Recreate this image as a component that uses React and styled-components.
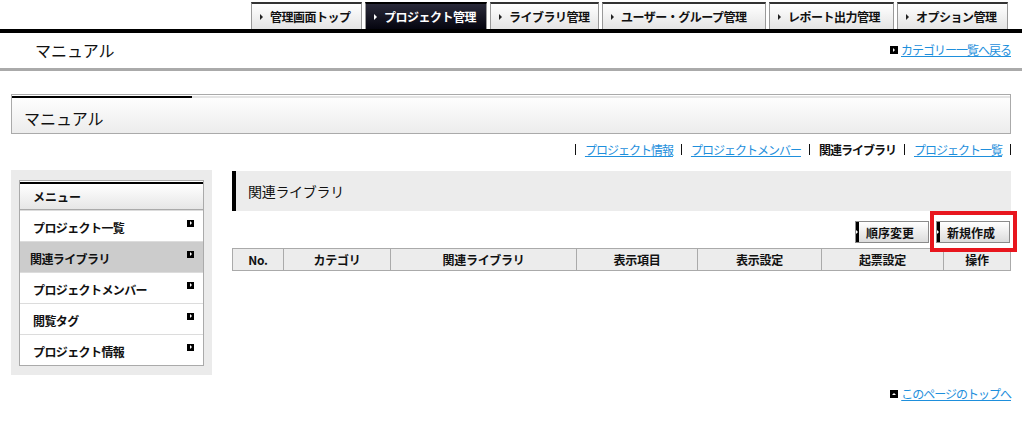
import React from "react";
import styled, { createGlobalStyle } from "styled-components";

const Global = createGlobalStyle`
  html, body { margin: 0; padding: 0; background: #fff; }
  body { font-family: "Noto Sans CJK JP", "Noto Sans", sans-serif; font-size: 12px; color: #111; }
  * { box-sizing: border-box; }
`;

const Page = styled.div`
  width: 1022px;
  min-height: 435px;
`;

const TopNav = styled.nav`
  display: flex;
  justify-content: flex-end;
  gap: 3px;
  padding: 2px 14px 0 0;
  border-bottom: 4px solid #000;
  height: 33px;
`;

const Tab = styled.a`
  display: flex;
  align-items: center;
  gap: 7px;
  width: ${(p) => p.$w}px;
  height: 27px;
  padding-left: 8px;
  font-weight: bold;
  font-size: 12px;
  letter-spacing: -0.5px;
  text-decoration: none;
  border: 1px solid #999;
  border-top: 2px solid ${(p) => (p.$active ? "#000" : "#333")};
  border-bottom: none;
  color: ${(p) => (p.$active ? "#fff" : "#111")};
  background: ${(p) =>
    p.$active
      ? "linear-gradient(#2a2a3a, #05050f)"
      : "linear-gradient(#ffffff, #e4e4e4)"};
`;

const TabArrow = styled.span`
  width: 0;
  height: 0;
  border-top: 3px solid transparent;
  border-bottom: 3px solid transparent;
  border-left: 3px solid ${(p) => (p.$light ? "#fff" : "#222")};
`;

const HeaderRow = styled.header`
  display: flex;
  align-items: center;
  justify-content: space-between;
  height: 38px;
  padding: 0 11px 2px 35px;
  border-bottom: 3px solid #aaa;
`;

const HeaderTitle = styled.h1`
  margin: 0;
  font-size: 16px;
  font-weight: normal;
  color: #111;
`;

const IconLink = styled.a`
  display: inline-flex;
  align-items: center;
  gap: 2px;
  color: #1e8fdc;
  text-decoration: underline;
  font-size: 12px;
  letter-spacing: -1px;
`;

const IconBox = styled.span`
  display: inline-flex;
  align-items: center;
  justify-content: center;
  width: 8px;
  height: 8px;
  background: #000;
  margin-right: 1px;
`;

const Panel = styled.section`
  margin: 23px 11px 0 11px;
  border: 1px solid #aaa;
  height: 40px;
  padding: 1px 0 0;
  background: linear-gradient(#ffffff, #ececec);
`;

const PanelStrip = styled.div`
  height: 2px;
  background: linear-gradient(to right, #000 0, #000 180px, #e4e4e4 180px);
`;

const PanelTitle = styled.h2`
  margin: 0;
  padding: 8px 0 0 12px;
  font-size: 16px;
  font-weight: normal;
  line-height: 24px;
`;

const SubNav = styled.ul`
  display: flex;
  justify-content: flex-end;
  align-items: center;
  list-style: none;
  margin: 0;
  padding: 0 11px 0 0;
  height: 31px;
  font-size: 12px;
  letter-spacing: -1px;
`;

const SubItem = styled.li`
  display: flex;
  align-items: center;
  &::before {
    content: "";
    width: 1px;
    height: 11px;
    background: #111;
    margin: 0 9px 0 8px;
  }
  &:last-child::after {
    content: "";
    width: 1px;
    height: 11px;
    background: #111;
    margin-left: 8px;
  }
`;

const SubLink = styled.a`
  color: ${(p) => (p.$current ? "#111" : "#1e8fdc")};
  text-decoration: ${(p) => (p.$current ? "none" : "underline")};
  font-weight: ${(p) => (p.$current ? "bold" : "normal")};
`;

const Body = styled.div`
  display: flex;
  gap: 20px;
  padding: 5px 11px 0 11px;
`;

const Side = styled.aside`
  width: 202px;
  background: #ebebeb;
  padding: 10px 8px 9px 8px;
`;

const Menu = styled.div`
  background: #fff;
  border: 1px solid #aaa;
`;

const MenuHead = styled.div`
  margin-top: 1px;
  border-top: 2px solid #000;
  border-bottom: 1px solid #aaa;
  height: 28px;
  display: flex;
  align-items: center;
  padding-left: 13px;
  font-weight: bold;
  background: linear-gradient(#ffffff, #e6e6e6);
`;

const MenuItem = styled.div`
  display: flex;
  align-items: center;
  justify-content: space-between;
  height: 31px;
  padding: 2px 9px 0 ${(p) => (p.$active ? 10 : 13)}px;
  font-weight: bold;
  letter-spacing: -0.6px;
  background: ${(p) => (p.$active ? "#cccccc" : "#fff")};
  border-top: 1px solid #dcdcdc;
  &:first-of-type { border-top: none; }
`;

const ItemArrow = styled.span`
  display: inline-flex;
  align-items: center;
  justify-content: center;
  width: 7px;
  height: 7px;
  background: #000;
  margin-top: -8px;
`;

const Main = styled.main`
  flex: 1;
  display: flex;
  flex-direction: column;
  padding-top: 1px;
`;

const Heading = styled.h3`
  margin: 0;
  height: 40px;
  display: flex;
  align-items: center;
  border-left: 4px solid #000;
  background: #ececec;
  padding-left: 12px;
  font-size: 14px;
  font-weight: normal;
  letter-spacing: -0.3px;
`;

const Buttons = styled.div`
  display: flex;
  justify-content: flex-end;
  align-items: flex-start;
  gap: 7px;
  padding: 10px 1px 0 0;
  height: 37px;
`;

const Highlight = styled.span`
  position: relative;
  display: inline-flex;
  &::after {
    content: "";
    position: absolute;
    top: -10px;
    left: -6px;
    right: -7px;
    bottom: -9px;
    border: 4px solid #e8161e;
    pointer-events: none;
  }
`;

const Button = styled.button`
  display: flex;
  align-items: center;
  width: 74px;
  height: 22px;
  padding: 0;
  border: 1px solid #8a8a8a;
  background: linear-gradient(#ffffff, #dcdcdc);
  font-family: inherit;
  font-size: 12px;
  font-weight: bold;
  color: #111;
  cursor: pointer;
`;

const ButtonBar = styled.span`
  display: flex;
  align-items: center;
  width: 3px;
  height: 100%;
  background: #000;
  margin-right: 7px;
  &::after {
    content: "";
    border-top: 2px solid transparent;
    border-bottom: 2px solid transparent;
    border-left: 2px solid #fff;
  }
`;

const Table = styled.table`
  width: 778px;
  border-collapse: collapse;
  table-layout: fixed;
`;

const Th = styled.th`
  width: ${(p) => p.$w}px;
  height: 22px;
  padding: 0;
  border: 1px solid #aaa;
  background: #ececec;
  font-size: 12px;
  font-weight: bold;
  text-align: center;
  letter-spacing: -0.3px;
`;

const Footer = styled.div`
  display: flex;
  justify-content: flex-end;
  padding: 10px 11px 0 0;
`;

const RightTri = () => (
  <svg width="4" height="6" viewBox="0 0 4 6"><path d="M1 1L3 3L1 5Z" fill="#fff" /></svg>
);
const UpTri = () => (
  <svg width="6" height="4" viewBox="0 0 6 4"><path d="M1 3L3 1L5 3Z" fill="#fff" /></svg>
);

const tabs = [
  { t: "管理画面トップ", w: 111 },
  { t: "プロジェクト管理", w: 122, active: true },
  { t: "ライブラリ管理", w: 109 },
  { t: "ユーザー・グループ管理", w: 164 },
  { t: "レポート出力管理", w: 125 },
  { t: "オプション管理", w: 111 },
];

const subs = [
  { t: "プロジェクト情報" },
  { t: "プロジェクトメンバー" },
  { t: "関連ライブラリ", current: true },
  { t: "プロジェクト一覧" },
];

const menu = [
  { t: "プロジェクト一覧" },
  { t: "関連ライブラリ", active: true },
  { t: "プロジェクトメンバー" },
  { t: "閲覧タグ" },
  { t: "プロジェクト情報" },
];

const cols = [
  { t: "No.", w: 51 },
  { t: "カテゴリ", w: 107 },
  { t: "関連ライブラリ", w: 186 },
  { t: "表示項目", w: 121 },
  { t: "表示設定", w: 124 },
  { t: "起票設定", w: 122 },
  { t: "操作", w: 67 },
];

export default function App() {
  return (
    <Page>
      <Global />
      <TopNav>
        {tabs.map((x) => (
          <Tab key={x.t} $w={x.w} $active={x.active}>
            <TabArrow $light={x.active} />
            {x.t}
          </Tab>
        ))}
      </TopNav>
      <HeaderRow>
        <HeaderTitle>マニュアル</HeaderTitle>
        <IconLink>
          <IconBox><RightTri /></IconBox>
          カテゴリー一覧へ戻る
        </IconLink>
      </HeaderRow>
      <Panel>
        <PanelStrip />
        <PanelTitle>マニュアル</PanelTitle>
      </Panel>
      <SubNav>
        {subs.map((s) => (
          <SubItem key={s.t}>
            <SubLink $current={s.current}>{s.t}</SubLink>
          </SubItem>
        ))}
      </SubNav>
      <Body>
        <Side>
          <Menu>
            <MenuHead>メニュー</MenuHead>
            {menu.map((m) => (
              <MenuItem key={m.t} $active={m.active}>
                {m.t}
                <ItemArrow><RightTri /></ItemArrow>
              </MenuItem>
            ))}
          </Menu>
        </Side>
        <Main>
          <Heading>関連ライブラリ</Heading>
          <Buttons>
            <Button><ButtonBar />順序変更</Button>
            <Highlight>
              <Button><ButtonBar />新規作成</Button>
            </Highlight>
          </Buttons>
          <Table>
            <thead>
              <tr>
                {cols.map((c) => (
                  <Th key={c.t} $w={c.w}>{c.t}</Th>
                ))}
              </tr>
            </thead>
          </Table>
        </Main>
      </Body>
      <Footer>
        <IconLink>
          <IconBox><UpTri /></IconBox>
          このページのトップへ
        </IconLink>
      </Footer>
    </Page>
  );
}
